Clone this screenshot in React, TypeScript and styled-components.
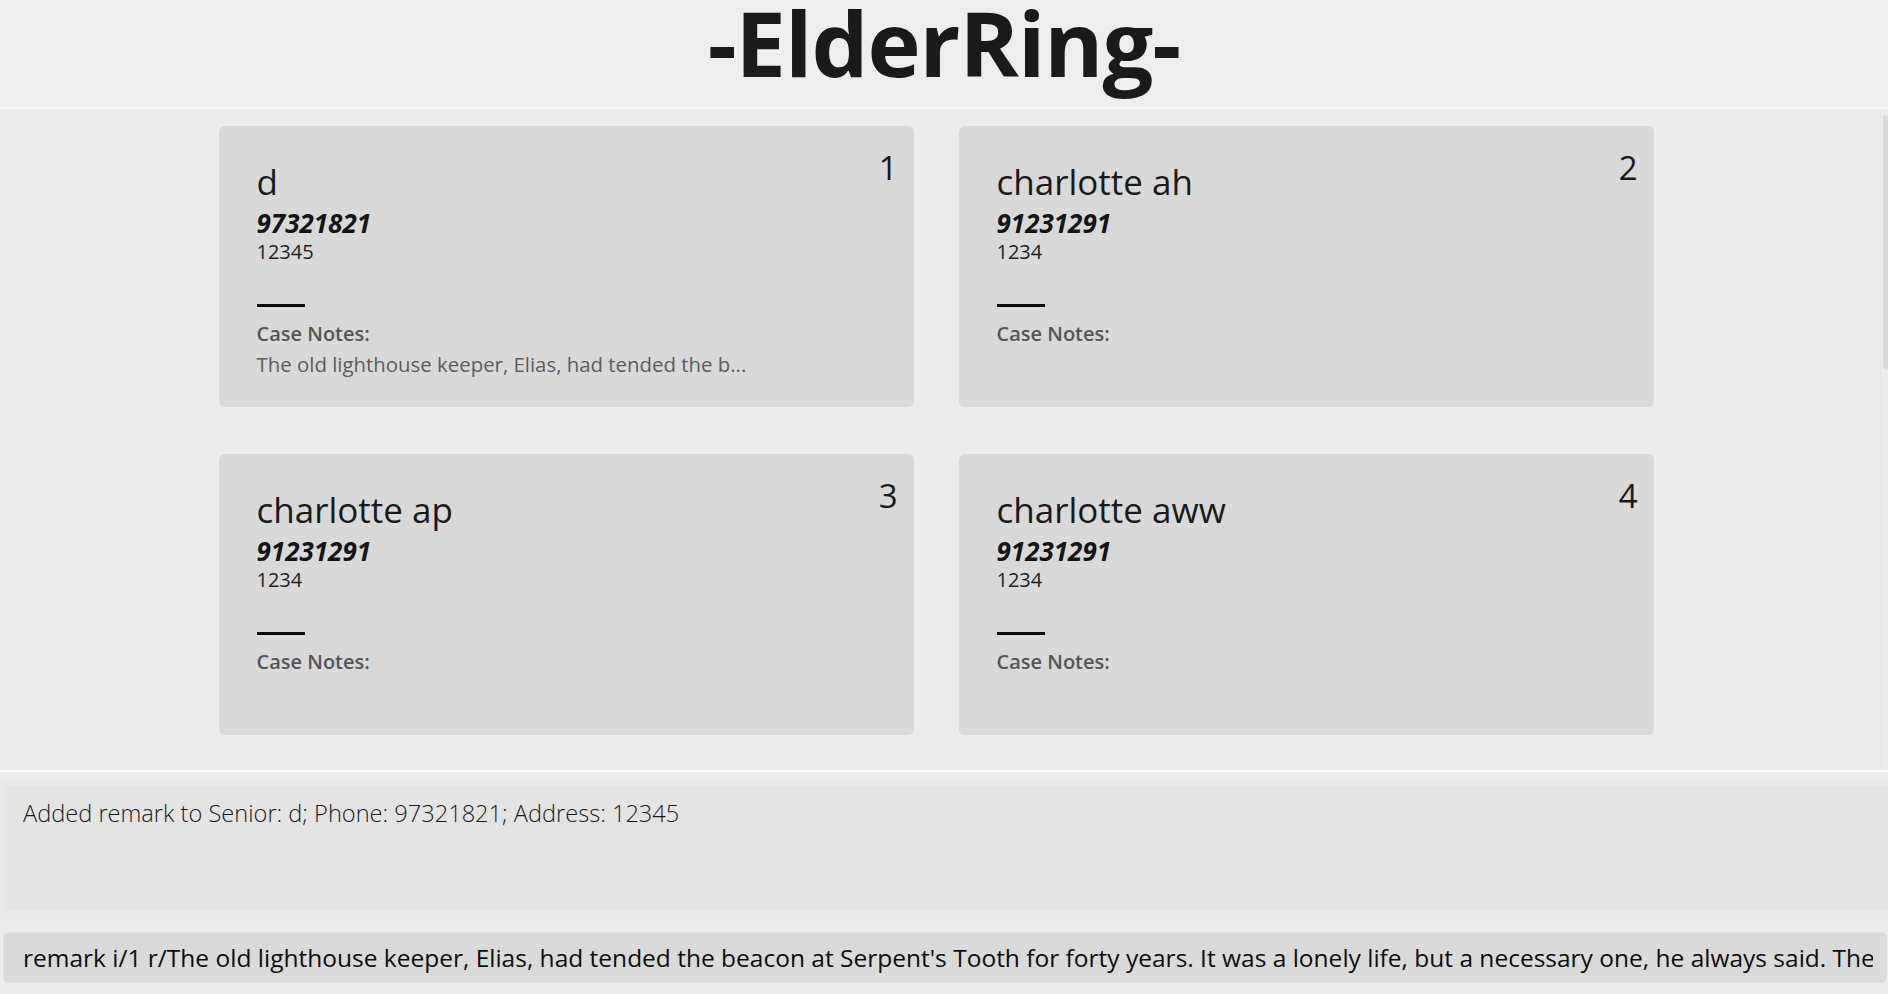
import React from "react";
import styled, { createGlobalStyle } from "styled-components";

const GlobalStyle = createGlobalStyle`
  html, body {
    margin: 0;
    padding: 0;
    background: #ececec;
  }
  body {
    font-family: "Open Sans", "Noto Sans", "Liberation Sans", sans-serif;
    color: #1a1a1a;
  }
  * { box-sizing: border-box; }
`;

const Page = styled.div`
  width: 100%;
  height: 100vh;
  display: flex;
  flex-direction: column;
  background: #ececec;
  overflow: hidden;
`;

const Header = styled.header`
  height: 109px;
  flex: none;
  background: #eeeeee;
  border-bottom: 2px solid #f8f8f8;
  display: flex;
  justify-content: center;
  align-items: flex-start;
`;

const Title = styled.h1`
  margin: 0;
  font-size: 90px;
  font-weight: 700;
  line-height: 84px;
  color: #1a1a1a;
  letter-spacing: -1px;
`;

const ListArea = styled.section`
  flex: none;
  height: 663px;
  display: flex;
  background: #ececec;
  border-bottom: 2px solid #f7f7f7;
`;

const Viewport = styled.div`
  flex: 1;
  display: flex;
  justify-content: center;
  padding: 17px 8px 0 0;
  overflow: hidden;
`;

const CardGrid = styled.div`
  display: grid;
  grid-template-columns: repeat(2, 695px);
  grid-auto-rows: 281px;
  column-gap: 45px;
  row-gap: 47px;
  align-content: start;
`;

const ScrollTrack = styled.div`
  width: 8px;
  flex: none;
  border-left: 1px solid #e6e6e6;
  padding: 6px 0 0 2px;
`;

const ScrollThumb = styled.div`
  width: 5px;
  height: 254px;
  border-radius: 3px;
  background: #d9d9d9;
`;

const Card = styled.article`
  background: #d9d9d9;
  border-radius: 6px;
  padding: 24px 16px 0 38px;
  display: flex;
  flex-direction: column;
`;

const CardTop = styled.div`
  display: flex;
  justify-content: space-between;
  align-items: flex-start;
`;

const Name = styled.div`
  margin-top: 12px;
  font-size: 35px;
  line-height: 40px;
  font-weight: 400;
  color: #1a1a1a;
`;

const Index = styled.div`
  font-size: 33px;
  line-height: 36px;
  font-weight: 400;
  color: #1a1a1a;
`;

const Phone = styled.div`
  margin-top: 6px;
  font-size: 26px;
  line-height: 30px;
  font-weight: 700;
  font-style: italic;
  color: #141414;
`;

const Address = styled.div`
  margin-top: 1px;
  font-size: 20px;
  line-height: 26px;
  font-weight: 400;
  color: #222;
`;

const Divider = styled.div`
  margin-top: 39px;
  width: 48px;
  height: 3px;
  background: #0a0a0a;
`;

const NotesLabel = styled.div`
  margin-top: 14px;
  font-size: 20px;
  line-height: 26px;
  font-weight: 600;
  color: #555;
`;

const NotesText = styled.div`
  margin-top: 3px;
  font-size: 20.4px;
  line-height: 28px;
  font-weight: 400;
  color: #5c5c5c;
`;

const ResultArea = styled.section`
  flex: none;
  padding: 9px 0 0 3px;
  height: 151px;
`;

const ResultBox = styled.div`
  height: 132px;
  background: #e4e4e4;
  border: 4px solid #e9e9e9;
  border-right: none;
  border-bottom-width: 3px;
  padding: 12px 0 0 16px;
  font-size: 23.6px;
  line-height: 32px;
  font-weight: 300;
  color: #1a1a1a;
`;

const CommandArea = styled.section`
  flex: none;
  padding: 9px 1px 0 3px;
`;

const CommandInput = styled.input`
  display: block;
  width: 100%;
  height: 51px;
  margin: 0;
  padding: 0 13px 0 19px;
  border: 1px solid #e1e1e1;
  border-radius: 5px;
  background: #dadada;
  font-family: "Open Sans", "Noto Sans", "Liberation Sans", sans-serif;
  font-size: 24.5px;
  color: #0d0d0d;
  outline: none;
`;

type Senior = {
  id: number;
  name: string;
  phone: string;
  address: string;
  notes?: string;
};

const seniors: Senior[] = [
  {
    id: 1,
    name: "d",
    phone: "97321821",
    address: "12345",
    notes: "The old lighthouse keeper, Elias, had tended the b...",
  },
  { id: 2, name: "charlotte ah", phone: "91231291", address: "1234" },
  { id: 3, name: "charlotte ap", phone: "91231291", address: "1234" },
  { id: 4, name: "charlotte aww", phone: "91231291", address: "1234" },
];

const command =
  "remark i/1 r/The old lighthouse keeper, Elias, had tended the beacon at Serpent's Tooth for forty years. It was a lonely life, but a necessary one, he always said. The";

export default function App() {
  return (
    <>
      <GlobalStyle />
      <Page>
        <Header>
          <Title>-ElderRing-</Title>
        </Header>
        <ListArea>
          <Viewport>
            <CardGrid>
              {seniors.map((s) => (
                <Card key={s.id}>
                  <CardTop>
                    <Name>{s.name}</Name>
                    <Index>{s.id}</Index>
                  </CardTop>
                  <Phone>{s.phone}</Phone>
                  <Address>{s.address}</Address>
                  <Divider />
                  <NotesLabel>Case Notes:</NotesLabel>
                  {s.notes && <NotesText>{s.notes}</NotesText>}
                </Card>
              ))}
            </CardGrid>
          </Viewport>
          <ScrollTrack>
            <ScrollThumb />
          </ScrollTrack>
        </ListArea>
        <ResultArea>
          <ResultBox>
            Added remark to Senior: d; Phone: 97321821; Address: 12345
          </ResultBox>
        </ResultArea>
        <CommandArea>
          <CommandInput readOnly value={command} />
        </CommandArea>
      </Page>
    </>
  );
}
